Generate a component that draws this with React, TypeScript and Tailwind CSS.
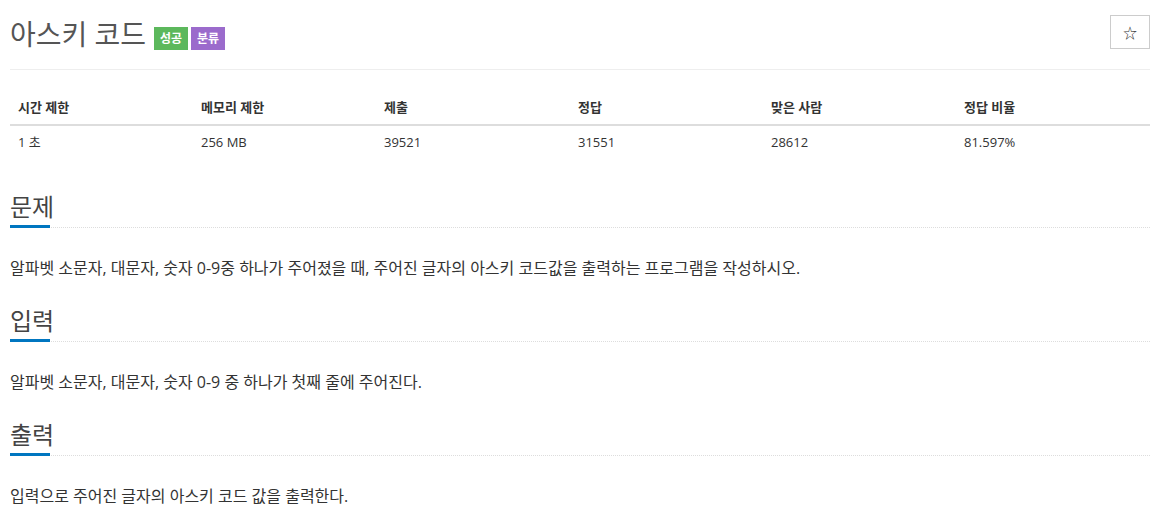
import React from "react";

const stats = [
  { label: "시간 제한", value: "1 초", w: "w-[183px]" },
  { label: "메모리 제한", value: "256 MB", w: "w-[183px]" },
  { label: "제출", value: "39521", w: "w-[194px]" },
  { label: "정답", value: "31551", w: "w-[193px]" },
  { label: "맞은 사람", value: "28612", w: "w-[193px]" },
  { label: "정답 비율", value: "81.597%", w: "flex-1" },
];

const sections = [
  {
    title: "문제",
    body: "알파벳 소문자, 대문자, 숫자 0-9중 하나가 주어졌을 때, 주어진 글자의 아스키 코드값을 출력하는 프로그램을 작성하시오.",
  },
  {
    title: "입력",
    body: "알파벳 소문자, 대문자, 숫자 0-9 중 하나가 첫째 줄에 주어진다.",
  },
  {
    title: "출력",
    body: "입력으로 주어진 글자의 아스키 코드 값을 출력한다.",
  },
];

const Section = ({ title, body }: { title: string; body: string }) => (
  <section className="mt-[25px] first:mt-[32px]">
    <div className="relative border-b border-dotted border-[#ddd] pb-[4px]">
      <h2 className="text-[24px] leading-[32px] text-[#444] font-normal">{title}</h2>
      <span className="absolute left-0 bottom-[-1px] h-[3px] w-[40px] bg-[#0076c0]" />
    </div>
    <p className="mt-[28px] text-[16px] leading-[24px] text-[#333]">{body}</p>
  </section>
);

export default function App() {
  return (
    <div
      className="w-[1167px] h-[517px] bg-white overflow-hidden pl-[10px] pr-[17px]"
      style={{ fontFamily: '"Open Sans", "Noto Sans CJK KR", sans-serif' }}
    >
      <div className="flex items-start justify-between pt-[15px] pb-[18px] border-b border-[#eee]">
        <div className="flex items-end gap-[8px] pt-[2px]">
          <h1 className="text-[28px] leading-[34px] text-[#555] font-normal">아스키 코드</h1>
          <div className="flex gap-[3px] mb-[1px]">
            <span className="h-[23px] w-[34px] flex items-center justify-center bg-[#5cb85c] text-white text-[12px] font-bold">
              성공
            </span>
            <span className="h-[23px] w-[34px] flex items-center justify-center bg-[#9b6bcc] text-white text-[12px] font-bold">
              분류
            </span>
          </div>
        </div>
        <button className="h-[34px] w-[40px] border border-[#ccc] flex items-center justify-center text-[14px] text-[#333]">
          ☆
        </button>
      </div>

      <div className="mt-[20px]">
        <div className="flex border-b-2 border-[#ddd]">
          {stats.map((s) => (
            <div key={s.label} className={`${s.w} px-[8px] py-[8px] text-[13px] leading-[18px] font-bold text-[#333]`}>
              {s.label}
            </div>
          ))}
        </div>
        <div className="flex">
          {stats.map((s) => (
            <div key={s.label} className={`${s.w} px-[8px] pt-[7px] pb-[8px] text-[13px] leading-[18px] text-[#333]`}>
              {s.value}
            </div>
          ))}
        </div>
      </div>

      <div className="flex flex-col">
        {sections.map((s) => (
          <Section key={s.title} title={s.title} body={s.body} />
        ))}
      </div>
    </div>
  );
}
